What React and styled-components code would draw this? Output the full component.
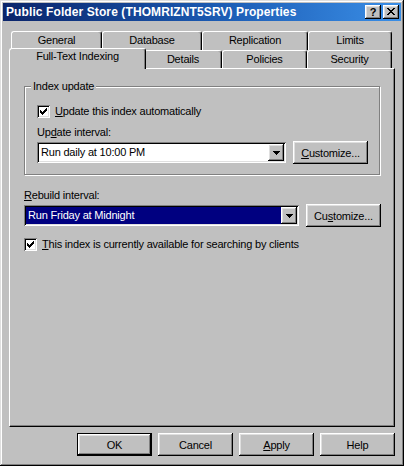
import React from 'react';
import styled, { createGlobalStyle } from 'styled-components';

const GlobalStyle = createGlobalStyle`
  html, body { margin: 0; padding: 0; background: #c0c0c0; }
  body { font-family: "Liberation Sans", Arial, sans-serif; font-size: 11px; color: #000; }
  * { box-sizing: border-box; }
`;

const raised = `box-shadow: inset -1px -1px #000, inset 1px 1px #fff, inset -2px -2px #808080, inset 2px 2px #dfdfdf;`;
const sunken = `box-shadow: inset 1px 1px #808080, inset -1px -1px #fff, inset 2px 2px #000, inset -2px -2px #dfdfdf;`;

const Window = styled.div`
  width: 404px;
  height: 466px;
  padding: 3px;
  background: #c0c0c0;
  box-shadow: inset -1px -1px #000, inset 1px 1px #dfdfdf, inset -2px -2px #808080, inset 2px 2px #fff;
  display: flex;
  flex-direction: column;
`;

const TitleBar = styled.div`
  height: 18px;
  flex: none;
  display: flex;
  align-items: center;
  justify-content: space-between;
  padding: 0 2px 0 3px;
  background: linear-gradient(90deg, #0a246a 0%, #1c5cb4 55%, #3a8ee6 100%);
`;

const TitleText = styled.span`
  color: #fff;
  font-weight: bold;
  font-size: 12px;
  white-space: nowrap;
  letter-spacing: 0.1px;
`;

const CaptionButtons = styled.div`
  display: flex;
  gap: 2px;
`;

const CaptionButton = styled.div`
  width: 16px;
  height: 14px;
  background: #c0c0c0;
  ${raised}
  display: flex;
  align-items: center;
  justify-content: center;
  font-weight: bold;
  font-size: 11px;
  line-height: 14px;
  padding-bottom: 1px;
`;

const Client = styled.div`
  flex: 1;
  display: flex;
  flex-direction: column;
  padding: 10px 6px 7px 6px;
`;

const TabRow = styled.div`
  display: flex;
  padding-left: 2px;
  height: ${p => p.$h}px;
  flex: none;
`;

const Tab = styled.div`
  width: ${p => p.$w}px;
  height: 100%;
  flex: none;
  background: #c0c0c0;
  border-top: 1px solid #fff;
  border-left: 1px solid #fff;
  border-right: 1px solid #000;
  border-radius: 3px 3px 0 0;
  box-shadow: inset -1px 0 #808080;
  text-align: center;
  line-height: 13px;
  padding-top: ${p => p.$pt}px;
  letter-spacing: -0.2px;
  white-space: nowrap;
`;

const ActiveTab = styled(Tab)`
  position: relative;
  z-index: 2;
  width: ${p => p.$w + 4}px;
  height: 21px;
  margin: -2px -2px 0 -2px;
`;

const Panel = styled.div`
  flex: 1;
  display: flex;
  flex-direction: column;
  align-items: flex-start;
  border-top: 1px solid #fff;
  border-left: 1px solid #fff;
  border-right: 1px solid #000;
  border-bottom: 1px solid #000;
  box-shadow: inset -1px -1px #808080;
  padding: 17px 13px 0 14px;
`;

const Group = styled.div`
  position: relative;
  align-self: stretch;
  margin-right: 1px;
  border: 1px solid #808080;
  box-shadow: inset 1px 1px #fff, 1px 1px #fff;
  padding: 18px 11px 10px 12px;
  display: flex;
  flex-direction: column;
  align-items: flex-start;
`;

const GroupLabel = styled.span`
  position: absolute;
  top: -7px;
  left: 6px;
  padding: 0 2px;
  background: #c0c0c0;
  line-height: 13px;
  letter-spacing: -0.2px;
`;

const CheckRow = styled.div`
  display: flex;
  align-items: center;
  gap: 5px;
  height: 13px;
  margin-top: ${p => p.$mt || 0}px;
  letter-spacing: -0.2px;
  line-height: 13px;
  white-space: nowrap;
`;

const CheckBox = styled.div`
  width: 13px;
  height: 13px;
  flex: none;
  background: #fff;
  ${sunken}
  display: flex;
  align-items: center;
  justify-content: center;
`;

const FieldLabel = styled.div`
  line-height: 13px;
  margin-top: ${p => p.$mt}px;
  letter-spacing: -0.2px;
  white-space: nowrap;
`;

const ComboRow = styled.div`
  display: flex;
  align-items: center;
  gap: 7px;
  height: 23px;
  margin-top: 2px;
`;

const Combo = styled.div`
  width: ${p => p.$w}px;
  height: 21px;
  padding: 2px;
  background: #fff;
  ${sunken}
  display: flex;
`;

const ComboValue = styled.div`
  flex: 1;
  background: ${p => (p.$selected ? '#000080' : '#fff')};
  color: ${p => (p.$selected ? '#fff' : '#000')};
  padding-left: 2px;
  line-height: 17px;
  letter-spacing: -0.2px;
  white-space: nowrap;
`;

const DropButton = styled.div`
  width: 16px;
  height: 17px;
  flex: none;
  background: #c0c0c0;
  ${raised}
  display: flex;
  align-items: center;
  justify-content: center;
`;

const PushButton = styled.div`
  width: 75px;
  height: 23px;
  flex: none;
  background: #c0c0c0;
  ${raised}
  ${p => p.$default && `border: 1px solid #000;`}
  display: flex;
  align-items: center;
  justify-content: center;
  letter-spacing: -0.2px;
  white-space: nowrap;
`;

const ButtonRow = styled.div`
  display: flex;
  justify-content: flex-end;
  gap: 6px;
  margin-top: 6px;
  flex: none;
`;

const CheckMark = () => (
  <svg width="7" height="7" viewBox="0 0 7 7" shapeRendering="crispEdges">
    <rect x="0" y="2" width="1" height="3" fill="#000" />
    <rect x="1" y="3" width="1" height="3" fill="#000" />
    <rect x="2" y="4" width="1" height="3" fill="#000" />
    <rect x="3" y="3" width="1" height="3" fill="#000" />
    <rect x="4" y="2" width="1" height="3" fill="#000" />
    <rect x="5" y="1" width="1" height="3" fill="#000" />
    <rect x="6" y="0" width="1" height="3" fill="#000" />
  </svg>
);

const Arrow = () => (
  <svg width="7" height="4" viewBox="0 0 7 4" shapeRendering="crispEdges">
    <rect x="0" y="0" width="7" height="1" fill="#000" />
    <rect x="1" y="1" width="5" height="1" fill="#000" />
    <rect x="2" y="2" width="3" height="1" fill="#000" />
    <rect x="3" y="3" width="1" height="1" fill="#000" />
  </svg>
);

const CloseGlyph = () => (
  <svg width="8" height="7" viewBox="0 0 8 7" shapeRendering="crispEdges">
    {[0, 1, 2, 3, 4, 5, 6].map(i => (
      <React.Fragment key={i}>
        <rect x={i} y={i} width="2" height="1" fill="#000" />
        <rect x={6 - i} y={i} width="2" height="1" fill="#000" />
      </React.Fragment>
    ))}
  </svg>
);

export default function App() {
  return (
    <>
      <GlobalStyle />
      <Window>
        <TitleBar>
          <TitleText>Public Folder Store (THOMRIZNT5SRV) Properties</TitleText>
          <CaptionButtons>
            <CaptionButton>?</CaptionButton>
            <CaptionButton><CloseGlyph /></CaptionButton>
          </CaptionButtons>
        </TitleBar>
        <Client>
          <TabRow $h={19}>
            <Tab $w={91} $pt={2}>General</Tab>
            <Tab $w={100} $pt={2}>Database</Tab>
            <Tab $w={106} $pt={2}>Replication</Tab>
            <Tab $w={84} $pt={2}>Limits</Tab>
          </TabRow>
          <TabRow $h={18}>
            <ActiveTab $w={133} $pt={1}>Full-Text Indexing</ActiveTab>
            <Tab $w={78} $pt={2}>Details</Tab>
            <Tab $w={85} $pt={2}>Policies</Tab>
            <Tab $w={85} $pt={2}>Security</Tab>
          </TabRow>
          <Panel>
            <Group>
              <GroupLabel>Index update</GroupLabel>
              <CheckRow>
                <CheckBox><CheckMark /></CheckBox>
                <span><u>U</u>pdate this index automatically</span>
              </CheckRow>
              <FieldLabel $mt={8}>Up<u>d</u>ate interval:</FieldLabel>
              <ComboRow>
                <Combo $w={249}>
                  <ComboValue>Run daily at 10:00 PM</ComboValue>
                  <DropButton><Arrow /></DropButton>
                </Combo>
                <PushButton><span><u>C</u>ustomize...</span></PushButton>
              </ComboRow>
            </Group>
            <FieldLabel $mt={14}><u>R</u>ebuild interval:</FieldLabel>
            <ComboRow>
              <Combo $w={275}>
                <ComboValue $selected>Run Friday at Midnight</ComboValue>
                <DropButton><Arrow /></DropButton>
              </Combo>
              <PushButton><span>Cu<u>s</u>tomize...</span></PushButton>
            </ComboRow>
            <CheckRow $mt={11}>
              <CheckBox><CheckMark /></CheckBox>
              <span><u>T</u>his index is currently available for searching by clients</span>
            </CheckRow>
          </Panel>
          <ButtonRow>
            <PushButton $default>OK</PushButton>
            <PushButton>Cancel</PushButton>
            <PushButton><span><u>A</u>pply</span></PushButton>
            <PushButton>Help</PushButton>
          </ButtonRow>
        </Client>
      </Window>
    </>
  );
}
